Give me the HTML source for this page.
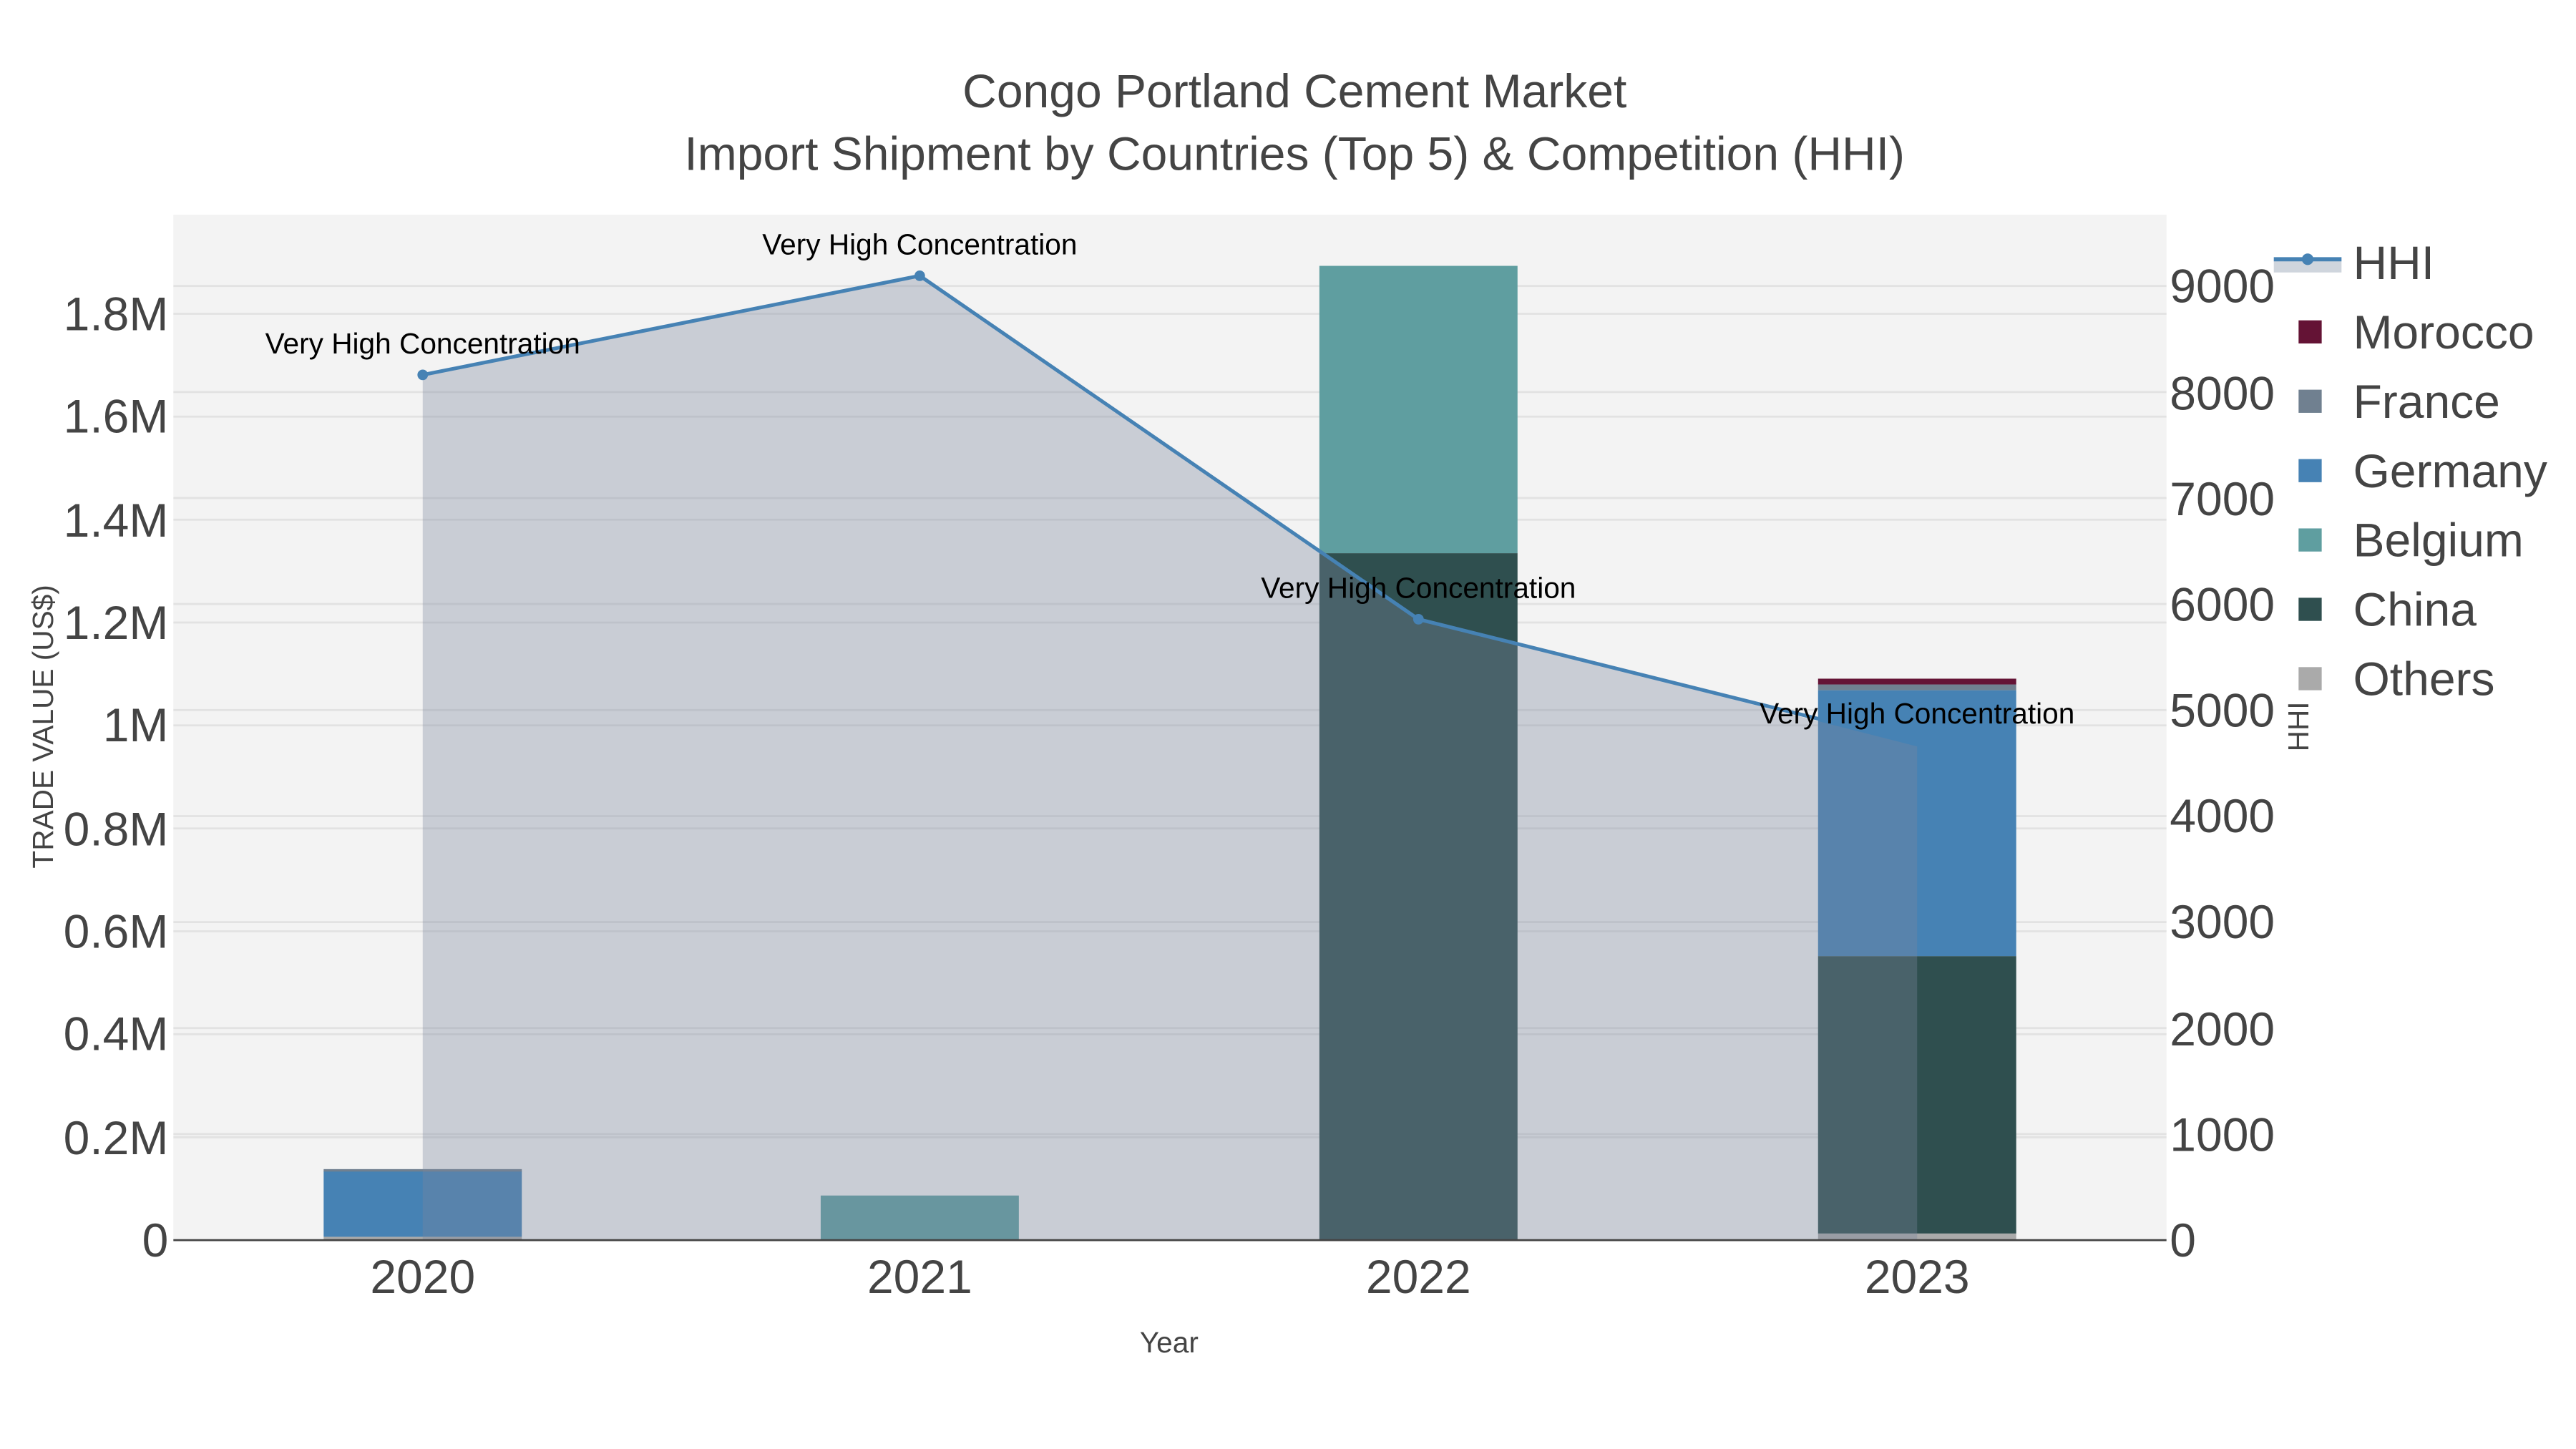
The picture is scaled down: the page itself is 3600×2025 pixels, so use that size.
<!DOCTYPE html>
<html><head><meta charset="utf-8"><style>
html,body{margin:0;padding:0;background:#fff;}
svg{display:block;}
text{font-family:"Liberation Sans",Arial,sans-serif;}
</style></head><body>
<svg width="3600" height="2025" viewBox="0 0 1560 877.5" xmlns="http://www.w3.org/2000/svg">
<rect width="1560" height="877.5" fill="#fff"/>
<rect x="105" y="130" width="1207" height="621" fill="#f3f3f3"/>
<g stroke="#e2e2e2" stroke-width="1.2">
<line x1="105" x2="1312" y1="688.7" y2="688.7"/><line x1="105" x2="1312" y1="626.3" y2="626.3"/>
<line x1="105" x2="1312" y1="564" y2="564"/><line x1="105" x2="1312" y1="501.7" y2="501.7"/>
<line x1="105" x2="1312" y1="439.3" y2="439.3"/><line x1="105" x2="1312" y1="377" y2="377"/>
<line x1="105" x2="1312" y1="314.7" y2="314.7"/><line x1="105" x2="1312" y1="252.3" y2="252.3"/>
<line x1="105" x2="1312" y1="190" y2="190"/>
<line x1="105" x2="1312" y1="686.8" y2="686.8"/><line x1="105" x2="1312" y1="622.6" y2="622.6"/>
<line x1="105" x2="1312" y1="558.4" y2="558.4"/><line x1="105" x2="1312" y1="494.2" y2="494.2"/>
<line x1="105" x2="1312" y1="430" y2="430"/><line x1="105" x2="1312" y1="365.8" y2="365.8"/>
<line x1="105" x2="1312" y1="301.6" y2="301.6"/><line x1="105" x2="1312" y1="237.4" y2="237.4"/>
<line x1="105" x2="1312" y1="173.2" y2="173.2"/>
</g>
<rect x="196" y="709" width="120" height="40" fill="#4682b4"/>
<rect x="196" y="708" width="120" height="1.5" fill="#708090"/>
<rect x="196" y="749" width="120" height="2" fill="#aaa"/>
<rect x="497" y="724" width="120" height="27" fill="#5f9ea0"/>
<rect x="799" y="335" width="120" height="416" fill="#2f4f4f"/>
<rect x="799" y="161" width="120" height="174" fill="#5f9ea0"/>
<rect x="1101" y="747" width="120" height="4" fill="#aaa"/>
<rect x="1101" y="579" width="120" height="168" fill="#2f4f4f"/>
<rect x="1101" y="418" width="120" height="161" fill="#4682b4"/>
<rect x="1101" y="414.5" width="120" height="3.5" fill="#708090"/>
<rect x="1101" y="411" width="120" height="3.5" fill="#641335"/>
<polygon points="256,751 256,227 557,167 859,375 1161,452 1161,751" fill="rgba(123,134,157,0.35)"/>
<polyline points="256,227 557,167 859,375 1120,440" fill="none" stroke="#4682b4" stroke-width="2.2"/>
<circle cx="256" cy="227" r="3.2" fill="#4682b4"/><circle cx="557" cy="167" r="3.2" fill="#4682b4"/>
<circle cx="859" cy="375" r="3.2" fill="#4682b4"/>
<line x1="105" x2="1312" y1="751" y2="751" stroke="#444" stroke-width="1.2"/>
<g font-size="17.6" fill="#000" text-anchor="middle">
<text x="256" y="214">Very High Concentration</text>
<text x="557" y="154">Very High Concentration</text>
<text x="859" y="362">Very High Concentration</text>
<text x="1161" y="438">Very High Concentration</text>
</g>
<g font-size="28.6" fill="#444" text-anchor="end">
<text x="102" y="761">0</text><text x="102" y="699">0.2M</text><text x="102" y="636">0.4M</text>
<text x="102" y="574">0.6M</text><text x="102" y="512">0.8M</text><text x="102" y="449">1M</text>
<text x="102" y="387">1.2M</text><text x="102" y="325">1.4M</text><text x="102" y="262">1.6M</text>
<text x="102" y="200">1.8M</text>
</g>
<g font-size="28.6" fill="#444">
<text x="1314" y="761">0</text><text x="1314" y="697">1000</text><text x="1314" y="633">2000</text>
<text x="1314" y="568">3000</text><text x="1314" y="504">4000</text><text x="1314" y="440">5000</text>
<text x="1314" y="376">6000</text><text x="1314" y="312">7000</text><text x="1314" y="248">8000</text>
<text x="1314" y="183">9000</text>
</g>
<g font-size="28.6" fill="#444" text-anchor="middle">
<text x="256" y="783">2020</text><text x="557" y="783">2021</text><text x="859" y="783">2022</text><text x="1161" y="783">2023</text>
</g>
<text x="708" y="819" font-size="17.6" fill="#444" text-anchor="middle">Year</text>
<text transform="translate(32,440) rotate(-90)" font-size="17.6" fill="#444" text-anchor="middle">TRADE VALUE (US$)</text>
<text transform="translate(1398,440) rotate(-90)" font-size="17.6" fill="#444" text-anchor="middle">HHI</text>
<g font-size="28.6" fill="#444" text-anchor="middle">
<text x="784" y="65">Congo Portland Cement Market</text>
<text x="784" y="103">Import Shipment by Countries (Top 5) &amp; Competition (HHI)</text>
</g>
<rect x="1377" y="158" width="41" height="7" fill="#cfd5dd"/>
<line x1="1377" x2="1418" y1="157" y2="157" stroke="#4682b4" stroke-width="2.5"/>
<circle cx="1397.5" cy="157" r="3.5" fill="#4682b4"/>
<rect x="1392" y="194" width="14" height="14" fill="#641335"/>
<rect x="1392" y="236" width="14" height="14" fill="#708090"/>
<rect x="1392" y="278" width="14" height="14" fill="#4682b4"/>
<rect x="1392" y="320" width="14" height="14" fill="#5f9ea0"/>
<rect x="1392" y="362" width="14" height="14" fill="#2f4f4f"/>
<rect x="1392" y="404" width="14" height="14" fill="#aaa"/>
<g font-size="28.6" fill="#444">
<text x="1425" y="169">HHI</text><text x="1425" y="211">Morocco</text><text x="1425" y="253">France</text>
<text x="1425" y="295">Germany</text><text x="1425" y="337">Belgium</text><text x="1425" y="379">China</text>
<text x="1425" y="421">Others</text>
</g>
</svg>
</body></html>
